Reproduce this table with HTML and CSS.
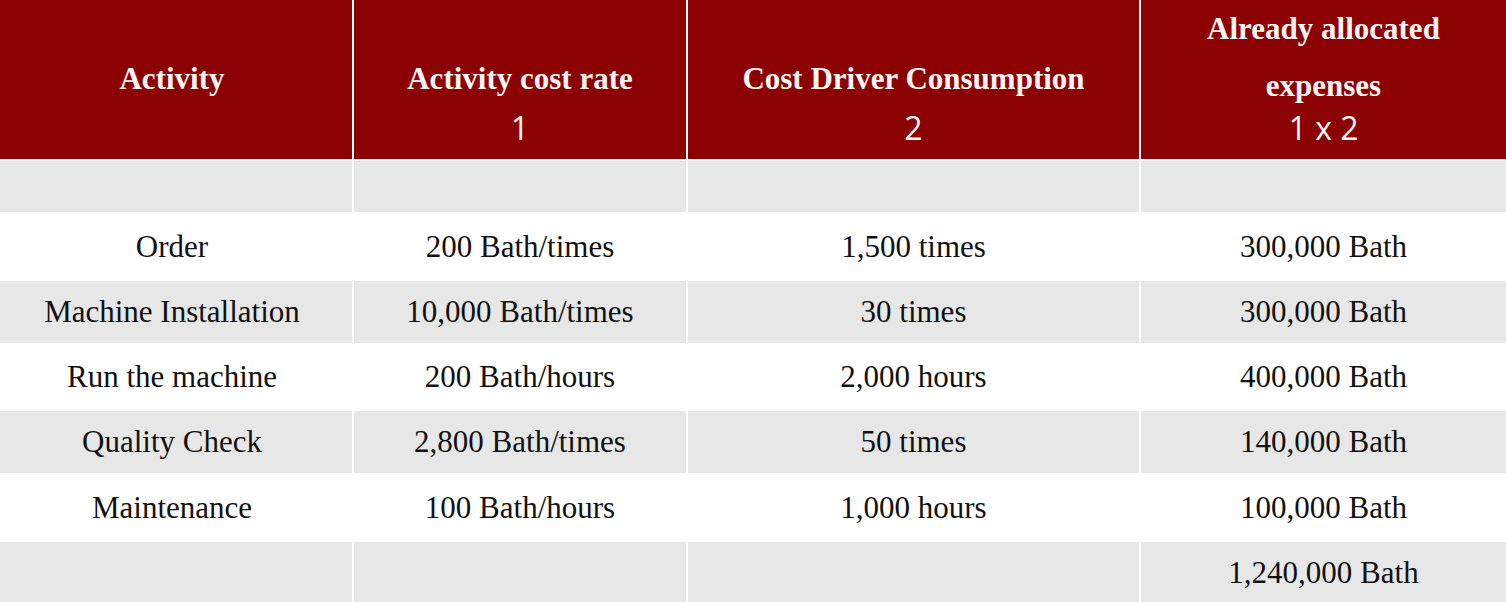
FILE: index.html
```html
<!DOCTYPE html>
<html lang="en">
<head>
<meta charset="utf-8">
<title>Activity cost allocation</title>
<link rel="stylesheet" href="styles.css">
</head>
<body>
<div class="table">
  <div class="cell head first"><div class="title">Activity</div><div class="num">&nbsp;</div></div>
  <div class="cell head"><div class="title">Activity cost rate</div><div class="num">1</div></div>
  <div class="cell head"><div class="title">Cost Driver Consumption</div><div class="num">2</div></div>
  <div class="cell head"><div class="title tall">Already allocated<br>expenses</div><div class="num">1 x 2</div></div>

  <div class="cell grey first"></div>
  <div class="cell grey"></div>
  <div class="cell grey"></div>
  <div class="cell grey"></div>

  <div class="cell white first">Order</div>
  <div class="cell white">200 Bath/times</div>
  <div class="cell white">1,500 times</div>
  <div class="cell white">300,000 Bath</div>

  <div class="cell grey first">Machine Installation</div>
  <div class="cell grey">10,000 Bath/times</div>
  <div class="cell grey">30 times</div>
  <div class="cell grey">300,000 Bath</div>

  <div class="cell white first">Run the machine</div>
  <div class="cell white">200 Bath/hours</div>
  <div class="cell white">2,000 hours</div>
  <div class="cell white">400,000 Bath</div>

  <div class="cell grey first">Quality Check</div>
  <div class="cell grey">2,800 Bath/times</div>
  <div class="cell grey">50 times</div>
  <div class="cell grey">140,000 Bath</div>

  <div class="cell white first">Maintenance</div>
  <div class="cell white">100 Bath/hours</div>
  <div class="cell white">1,000 hours</div>
  <div class="cell white">100,000 Bath</div>

  <div class="cell grey first"></div>
  <div class="cell grey"></div>
  <div class="cell grey"></div>
  <div class="cell grey">1,240,000 Bath</div>
</div>
</body>
</html>
```
FILE: styles.css
```css
html, body {
  margin: 0;
  padding: 0;
  background: #ffffff;
}

.table {
  display: grid;
  width: 1506px;
  grid-template-columns: 352px 332px 451px 1fr;
  grid-template-rows: 159px 51px 65px 62px 64px 62px 65px 62px;
  column-gap: 2px;
  row-gap: 2px;
  background: #ffffff;
  font-family: "Liberation Serif", "Times New Roman", serif;
  font-size: 31px;
  color: #111111;
}

.cell {
  display: flex;
  align-items: center;
  justify-content: center;
  text-align: center;
  white-space: nowrap;
}

.cell.first {
  padding-right: 8px;
}

.grey {
  background: #e7e7e7;
}

.white {
  background: #ffffff;
}

.head {
  background: #8b0000;
  color: #fdf6f4;
  flex-direction: column;
  justify-content: flex-end;
  padding-bottom: 9px;
}

.head .title {
  font-weight: bold;
  line-height: 56px;
  margin-bottom: -2px;
}

.head .title.tall {
  line-height: 57px;
  margin-bottom: -9px;
}

.head .num {
  font-family: "Open Sans", "Liberation Sans", sans-serif;
  font-size: 32px;
  line-height: 45px;
}
```
